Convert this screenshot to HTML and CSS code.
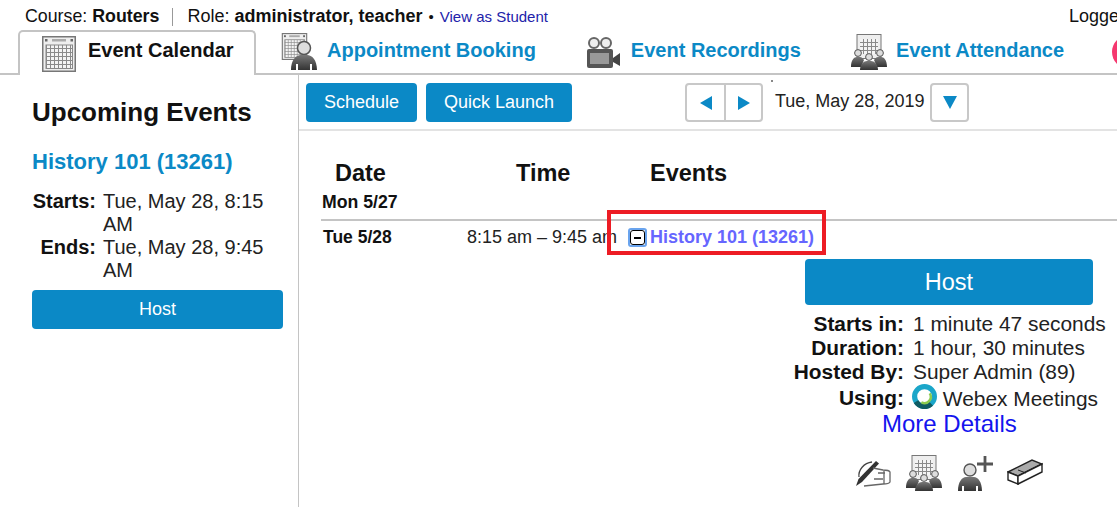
FILE: index.html
```html
<!DOCTYPE html>
<html lang="en">
<head>
<meta charset="utf-8">
<title>Event Calendar</title>
<link rel="stylesheet" href="styles.css">
</head>
<body>
<svg class="defs" width="0" height="0" aria-hidden="true">
  <defs>
    <linearGradient id="person" x1="0" y1="0" x2="0" y2="1"><stop offset="0" stop-color="#777"/><stop offset="1" stop-color="#333"/></linearGradient>
    <pattern id="cells" width="4" height="4" patternUnits="userSpaceOnUse"><rect width="4" height="4" fill="#f4f4f4"/><path d="M0 .5H4M.5 0V4" stroke="#8a8a8a" stroke-width="1"/></pattern>
    <symbol id="cal" viewBox="0 0 34 36">
      <rect x=".75" y=".75" width="32.5" height="34.5" fill="#eee" stroke="#777" stroke-width="1.5"/>
      <rect x="10" y="3" width="14" height="2.5" fill="#aaa"/>
      <rect x="3" y="3" width="2.5" height="2.5" fill="#666"/><rect x="28.5" y="3" width="2.5" height="2.5" fill="#666"/>
      <rect x="4" y="9" width="26.5" height="23.5" fill="url(#cells)" stroke="#888"/>
    </symbol>
    <symbol id="man" viewBox="0 0 28 30">
      <circle cx="14" cy="8" r="6.5" fill="#ddd" stroke="#555" stroke-width="1.5"/>
      <path d="M1 30C1 20 6 15 11 15H17C22 15 27 20 27 30H22V24H20V30H8V24H6V30Z" fill="url(#person)"/>
    </symbol>
    <symbol id="attend" viewBox="0 0 36 36">
      <rect x="6" y=".5" width="24" height="24" fill="#eee" stroke="#777"/>
      <rect x="9" y="5" width="18" height="15" fill="url(#cells)"/>
      <circle cx="7" cy="19" r="3.4" fill="#ddd" stroke="#555"/><circle cx="29" cy="19" r="3.4" fill="#ddd" stroke="#555"/>
      <path d="M0 33C0 26 3 23 6 23H9C11 23 12 25 13 26L10 33ZM36 33C36 26 33 23 30 23H27C25 23 24 25 23 26L26 33Z" fill="url(#person)"/>
      <circle cx="18" cy="23" r="3.4" fill="#ddd" stroke="#555"/>
      <path d="M9 36C9 30 13 27 16 27H20C23 27 27 30 27 36Z" fill="url(#person)"/>
    </symbol>
  </defs>
</svg>

<div class="page">
  <header class="infobar">
    <span class="course">Course: <b>Routers</b></span>
    <span class="sep"></span>
    <span>Role: <b>administrator, teacher</b> <span class="dot">•</span> <a class="student" href="#">View as Student</a></span>
    <span class="logged">Logged in as</span>
  </header>

  <nav class="tabs">
    <a class="tab active" href="#">
      <svg class="ico-cal"><use href="#cal"/></svg><span>Event Calendar</span>
    </a>
    <a class="tab booking" href="#">
      <span class="booking-ico">
        <svg class="booking-cal"><use href="#cal"/></svg>
        <svg class="booking-man"><use href="#man"/></svg>
      </span>
      <span>Appointment Booking</span>
    </a>
    <a class="tab recordings" href="#">
      <svg class="ico-cam" viewBox="0 0 34 32">
        <circle cx="8" cy="7" r="5" fill="#eee" stroke="#666" stroke-width="2"/>
        <circle cx="20" cy="7" r="5" fill="#eee" stroke="#666" stroke-width="2"/>
        <rect x="1" y="13" width="26" height="19" rx="2" fill="#555"/>
        <rect x="4" y="17" width="19" height="11" fill="#999"/>
        <path d="M27 22L34 17V30L27 26Z" fill="#444"/>
      </svg>
      <span>Event Recordings</span>
    </a>
    <a class="tab attendance" href="#">
      <svg class="ico-attend"><use href="#attend"/></svg><span>Event Attendance</span>
    </a>
    <span class="pink"></span>
  </nav>

  <div class="main">
    <aside class="side">
      <h1>Upcoming Events</h1>
      <a class="side-link" href="#">History 101 (13261)</a>
      <dl class="side-times">
        <dt>Starts:</dt><dd>Tue, May 28, 8:15 AM</dd>
        <dt>Ends:</dt><dd>Tue, May 28, 9:45 AM</dd>
      </dl>
      <a class="btn side-host" href="#">Host</a>
    </aside>

    <section class="content">
      <div class="toolbar">
        <a class="btn tool schedule" href="#">Schedule</a>
        <a class="btn tool quick" href="#">Quick Launch</a>
        <div class="datenav">
          <div class="group">
            <span class="nav-btn"><i class="arrow left"></i></span>
            <span class="nav-btn"><i class="arrow right"></i></span>
          </div>
          <span class="date">Tue, May 28, 2019</span>
          <span class="drop"><i class="arrow down"></i></span>
          <span class="speck"></span>
        </div>
      </div>

      <div class="schedule-table">
        <div class="heads"><span>Date</span><span>Time</span><span>Events</span></div>
        <div class="monday">Mon 5/27</div>
        <div class="tuesday">
          <b class="day">Tue 5/28</b>
          <span class="time">8:15 am – 9:45 am</span>
          <span class="minus"><i></i></span>
          <a class="event" href="#">History 101 (13261)</a>
          <span class="redbox"></span>
        </div>
        <div class="detail">
          <a class="btn host" href="#">Host</a>
          <dl class="facts">
            <dt>Starts in:</dt><dd>1 minute 47 seconds</dd>
            <dt>Duration:</dt><dd>1 hour, 30 minutes</dd>
            <dt>Hosted By:</dt><dd>Super Admin (89)</dd>
            <dt class="using">Using:</dt>
            <dd class="using">
              <svg class="webex" viewBox="0 0 24 24">
                <circle cx="12" cy="12" r="9.5" fill="none" stroke="#1ba6c9" stroke-width="5"/>
                <path d="M3.8 17A9.5 9.5 0 0 0 18.5 19" fill="none" stroke="#0f5c63" stroke-width="5"/>
                <path d="M17 9A6 6 0 0 1 9 17.5" fill="none" stroke="#8ccb4f" stroke-width="2.4"/>
              </svg>
              Webex Meetings
            </dd>
          </dl>
          <a class="more" href="#">More Details</a>
          <div class="actions">
            <svg class="act-sign" viewBox="0 0 36 30">
              <path d="M1 28L3.5 21L21 3L24 5.5L7 24Z" fill="#333"/>
              <path d="M4 19C3 12 9 5 17 4" fill="none" stroke="#444" stroke-width="1.3"/>
              <path d="M18 10L28 12C31 12 34 12 35 14V24C34 26 31 26 28 26L9 28M23 15H30M29 12V26M19 21H28" fill="none" stroke="#666" stroke-width="1.3"/>
            </svg>
            <svg class="act-attend"><use href="#attend"/></svg>
            <svg class="act-add" viewBox="0 0 36 36">
              <circle cx="13" cy="15" r="6" fill="#ddd" stroke="#555" stroke-width="1.4"/>
              <path d="M1 36C1 27 5 22 9 22H17C21 22 25 27 25 36H21V31H19V36H7V31H5V36Z" fill="url(#person)"/>
              <path d="M28 1V17M20 9H36" stroke="#555" stroke-width="2.8"/>
            </svg>
            <svg class="act-erase" viewBox="0 0 36 26">
              <path d="M1 13L25 1L35 5L11 17Z" fill="#aaa" stroke="#222" stroke-width="1.4"/>
              <path d="M1 13V21L11 25V17Z" fill="#fff" stroke="#222" stroke-width="1.4"/>
              <path d="M11 25L35 13V5L11 17Z" fill="#fff" stroke="#222" stroke-width="1.4"/>
              <path d="M11 11L19 14" stroke="#222"/>
            </svg>
          </div>
        </div>
      </div>
    </section>
  </div>
</div>
</body>
</html>
```
FILE: styles.css
```css
* { box-sizing: border-box; }
html, body { margin: 0; height: 100%; overflow: hidden; background: #fff; }
body { font-family: "Liberation Sans", Arial, sans-serif; color: #111; }
a { text-decoration: none; }
.defs { position: absolute; }
.page { width: 1117px; height: 507px; overflow: hidden; border-top: 3px solid #fff; position: relative; }
.page::before { content: ""; position: absolute; left: 0; right: 0; top: -2px; height: 2px; background: #c9ced2; }

.infobar { height: 27px; padding: 4px 0 0 25px; display: flex; align-items: flex-start; font-size: 18px; line-height: 19px; white-space: nowrap; position: relative; }
.infobar b { color: #111; }
.course { font-size: 17.8px; }
.sep { width: 1px; height: 18px; margin: 1px 14px 0 13px; background: #999; }
.dot { font-size: 15px; margin: 0 1px; }
.student { color: #2222aa; font-size: 15px; }
.logged { position: absolute; left: 1069px; top: 4px; }

.tabs { height: 45px; display: flex; position: relative; border-bottom: 2px solid #c4c4c4; font-size: 20px; font-weight: 700; }
.tab { display: flex; align-items: center; color: #0b89c6; white-space: nowrap; }
.tab.active { margin-left: 18px; width: 238px; height: 45px; padding: 0 0 7px 22px; gap: 12px; color: #111; font-size: 20px; background: #fff; border: 2px solid #c4c4c4; border-bottom: 0; border-radius: 5px 5px 0 0; position: relative; z-index: 1; }
.ico-cal { width: 34px; height: 36px; margin-top: 7px; }
.booking { margin-left: 25px; padding-bottom: 3px; }
.booking-ico { display: block; width: 46px; height: 38px; position: relative; margin-top: 3px; }
.booking-cal { width: 27px; height: 27px; position: absolute; left: 0; top: 0; }
.booking-man { width: 28px; height: 30px; position: absolute; left: 9px; top: 7px; }
.recordings { margin-left: 50px; padding-bottom: 3px; }
.ico-cam { width: 34px; height: 32px; margin-right: 11px; margin-top: 3px; }
.attendance { margin-left: 50px; padding-bottom: 3px; }
.ico-attend { width: 36px; height: 36px; margin-right: 9px; margin-top: 3px; }
.pink { position: absolute; left: 1112px; top: 5px; width: 34px; height: 34px; border-radius: 50%; background: #f5386f; }

.main { display: flex; height: 433px; }
.side { width: 299px; border-right: 1px solid #c4c4c4; padding: 21px 15px 0 32px; flex: none; }
.side h1 { margin: 0; font-size: 26px; line-height: 32px; color: #111; }
.side-link { display: block; margin-top: 21px; font-size: 22px; font-weight: 700; line-height: 26px; color: #0b89c6; }
.side-times { display: grid; grid-template-columns: 64px 1fr; column-gap: 7px; margin: 15px 0 0; font-size: 20px; line-height: 23px; }
.side-times dt { font-weight: 700; text-align: right; }
.side-times dd { margin: 0; color: #222; }
.btn { display: flex; align-items: center; justify-content: center; color: #fff; background: #0b89c6; border-radius: 4px; }
.side-host { margin-top: 8px; height: 39px; font-size: 18px; }

.content { flex: 1; min-width: 0; }
.toolbar { height: 56px; padding: 8px 0 0 7px; border-bottom: 2px solid #e3e3e3; display: flex; align-items: flex-start; }
.tool { height: 39px; font-size: 18px; }
.schedule { width: 111px; }
.quick { width: 146px; margin-left: 9px; }
.datenav { display: flex; margin-left: 113px; position: relative; }
.group { display: flex; border: 2px solid #c8c8c8; border-radius: 4px; height: 39px; }
.nav-btn { width: 37px; display: flex; align-items: center; justify-content: center; }
.nav-btn + .nav-btn { border-left: 2px solid #c8c8c8; }
.date { margin: 0 6px 0 12px; font-size: 18px; line-height: 37px; color: #222; }
.drop { width: 39px; height: 39px; border: 2px solid #c8c8c8; border-radius: 4px; display: flex; align-items: center; justify-content: center; }
.speck { position: absolute; left: 86px; top: -3px; width: 2px; height: 2px; background: #888; }
.arrow { display: block; width: 0; height: 0; border-style: solid; border-color: transparent; }
.arrow.left { border-width: 7px 12px 7px 0; border-right-color: #0b89c6; }
.arrow.right { border-width: 7px 0 7px 12px; border-left-color: #0b89c6; }
.arrow.down { border-width: 13px 7px 0 7px; border-top-color: #0b89c6; }

.schedule-table { padding: 28px 0 0 22px; }
.heads { display: flex; height: 28px; font-size: 23.5px; font-weight: 700; line-height: 28px; color: #111; }
.heads span:nth-child(1) { margin-left: 14px; width: 181px; }
.heads span:nth-child(2) { width: 134px; }
.monday { height: 28px; margin-top: 6px; font-size: 17.7px; font-weight: 700; line-height: 19px; border-bottom: 2px solid #c4c4c4; padding-left: 1px; }
.tuesday { display: flex; align-items: center; height: 33px; position: relative; font-size: 17.5px; padding-left: 2px; }
.day { width: 144px; }
.time { width: 161px; font-size: 18px; color: #222; white-space: nowrap; }
.minus { width: 19px; height: 19px; background: #fff; border: 2px solid #6aa4ee; border-radius: 3px; padding: 0; flex: none; display: flex; }
.minus i { display: flex; flex: 1; align-items: center; justify-content: center; border: 1.5px solid #000; border-radius: 3px; }
.minus i::before { content: ""; width: 7px; height: 2px; background: #000; }
.event { margin-left: 3px; font-size: 18px; font-weight: 700; color: #6666ff; white-space: nowrap; }
.redbox { position: absolute; left: 286px; top: -11px; width: 219px; height: 45px; border: 4px solid #ed1c24; }

.detail { width: 312px; margin-left: 472px; display: flex; flex-direction: column; align-items: flex-start; }
.host { width: 288px; height: 46px; margin-left: 12px; margin-top: 5px; font-size: 23.5px; }
.facts { display: grid; grid-template-columns: 111px auto; column-gap: 9px; margin: 7px 0 0; font-size: 20.9px; line-height: 24px; white-space: nowrap; }
.facts dt { font-weight: 700; text-align: right; }
.facts dd { margin: 0; color: #222; }
.facts .using { line-height: 28px; }
.webex { width: 25px; height: 25px; vertical-align: -3px; margin-left: -1px; }
.more { font-size: 24px; line-height: 26px; color: #1414ee; margin-left: 89px; margin-top: -2px; }
.actions { display: flex; align-items: flex-end; margin: 18px 0 0 62px; }
.act-sign { width: 36px; height: 30px; margin-bottom: 3px; }
.act-attend { width: 36px; height: 36px; margin-left: 15px; }
.act-add { width: 36px; height: 36px; margin-left: 15px; }
.act-erase { width: 36px; height: 26px; margin-left: 14px; margin-bottom: 6px; }
```
